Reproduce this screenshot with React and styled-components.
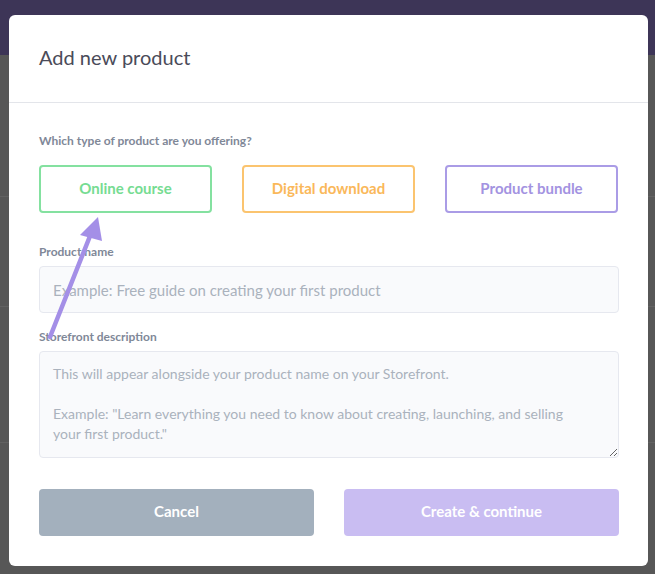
import React from 'react'
import styled, { createGlobalStyle } from 'styled-components'

const GlobalStyle = createGlobalStyle`
  * { box-sizing: border-box; }
  html, body {
    margin: 0;
    padding: 0;
    height: 100%;
    font-family: Lato, "Open Sans", sans-serif;
    overflow: hidden;
  }
`;

const Page = styled.div`
  width: 655px;
  height: 574px;
  background: #575757;
  display: flex;
  flex-direction: column;
`;

const TopBar = styled.div`
  height: 55px;
  background: #3d3557;
  flex-shrink: 0;
`;

const BackRow = styled.div`
  height: ${p => p.h}px;
  border-bottom: 1px solid #626262;
  flex-shrink: 0;
`;

const Overlay = styled.div`
  position: fixed;
  inset: 0;
  padding: 15px 0 0 9px;
`;

const Modal = styled.div`
  position: relative;
  width: 639px;
  height: 551px;
  background: #ffffff;
  border-radius: 6px;
  display: flex;
  flex-direction: column;
`;

const Header = styled.div`
  height: 88px;
  padding: 0 30px 4px;
  display: flex;
  align-items: center;
  border-bottom: 1px solid #e3e5ea;
`;

const Title = styled.h2`
  margin: 0;
  font-size: 20px;
  font-weight: 400;
  color: #4a4b59;
`;

const Body = styled.div`
  padding: 30px 29px 30px 30px;
  display: flex;
  flex-direction: column;
`;

const Label = styled.label`
  display: block;
  font-size: 12px;
  line-height: 16px;
  font-weight: 700;
  color: #7f8898;
  margin-top: ${p => p.top || 0}px;
  margin-bottom: ${p => p.bottom || 0}px;
`;

const TileRow = styled.div`
  display: grid;
  grid-template-columns: repeat(3, 173px);
  justify-content: space-between;
  margin-right: 1px;
`;

const Tile = styled.button`
  height: 48px;
  padding: 0 0 2px;
  background: #fff;
  border: 2px solid ${p => p.border};
  border-radius: 4px;
  color: ${p => p.color};
  font-family: inherit;
  font-size: 15px;
  font-weight: 700;
  cursor: pointer;
`;

const Input = styled.input`
  height: 47px;
  width: 100%;
  background: #f9fafc;
  border: 1px solid #e6e8ef;
  border-radius: 4px;
  padding: 0 13px;
  font-family: inherit;
  font-size: 15px;
  color: #4b4c5a;
  &::placeholder { color: #aab2bd; }
`;

const TextArea = styled.textarea`
  height: 107px;
  width: 100%;
  background: #f9fafc;
  border: 1px solid #e6e8ef;
  border-radius: 4px;
  padding: 12px 40px 12px 13px;
  font-family: inherit;
  font-size: 14px;
  line-height: 20px;
  color: #4b4c5a;
  resize: vertical;
  &::placeholder { color: #aab2bd; }
`;

const Actions = styled.div`
  display: grid;
  grid-template-columns: 275px 275px;
  justify-content: space-between;
  margin-top: 31px;
`;

const ActionButton = styled.button`
  height: 47px;
  padding: 0 0 3px;
  border: none;
  border-radius: 4px;
  background: ${p => p.bg};
  color: #fff;
  font-family: inherit;
  font-size: 15px;
  font-weight: 700;
  cursor: pointer;
`;

const Arrow = styled.svg`
  position: absolute;
  left: 0;
  top: 0;
  pointer-events: none;
`;

const tiles = [
  { label: 'Online course', border: '#84e1a0', color: '#76dc92' },
  { label: 'Digital download', border: '#fbc46f', color: '#fab85a' },
  { label: 'Product bundle', border: '#aa9ce6', color: '#a393e1' },
];

const placeholder = 'This will appear alongside your product name on your Storefront.\n\nExample: "Learn everything you need to know about creating, launching, and selling your first product."';

export default function App() {
  return (
    <>
      <GlobalStyle />
      <Page>
        <TopBar />
        <BackRow h={142} />
        <BackRow h={110} />
        <BackRow h={136} />
      </Page>
      <Overlay>
        <Modal>
          <Header>
            <Title>Add new product</Title>
          </Header>
          <Body>
            <Label bottom={16}>Which type of product are you offering?</Label>
            <TileRow>
              {tiles.map(t => (
                <Tile key={t.label} border={t.border} color={t.color}>{t.label}</Tile>
              ))}
            </TileRow>
            <Label top={31} bottom={6}>Product name</Label>
            <Input placeholder="Example: Free guide on creating your first product" />
            <Label top={16} bottom={6}>Storefront description</Label>
            <TextArea placeholder={placeholder} />
            <Actions>
              <ActionButton bg="#a3b0bd">Cancel</ActionButton>
              <ActionButton bg="#c9bdf2">Create &amp; continue</ActionButton>
            </Actions>
          </Body>
          <Arrow width="120" height="340" viewBox="0 0 120 340">
            <line x1="41" y1="322" x2="83" y2="216" stroke="#a48fe7" strokeWidth="4.5" strokeLinecap="round" />
            <polygon points="89,202 71,220 93,226" fill="#a48fe7" />
          </Arrow>
        </Modal>
      </Overlay>
    </>
  )
}
